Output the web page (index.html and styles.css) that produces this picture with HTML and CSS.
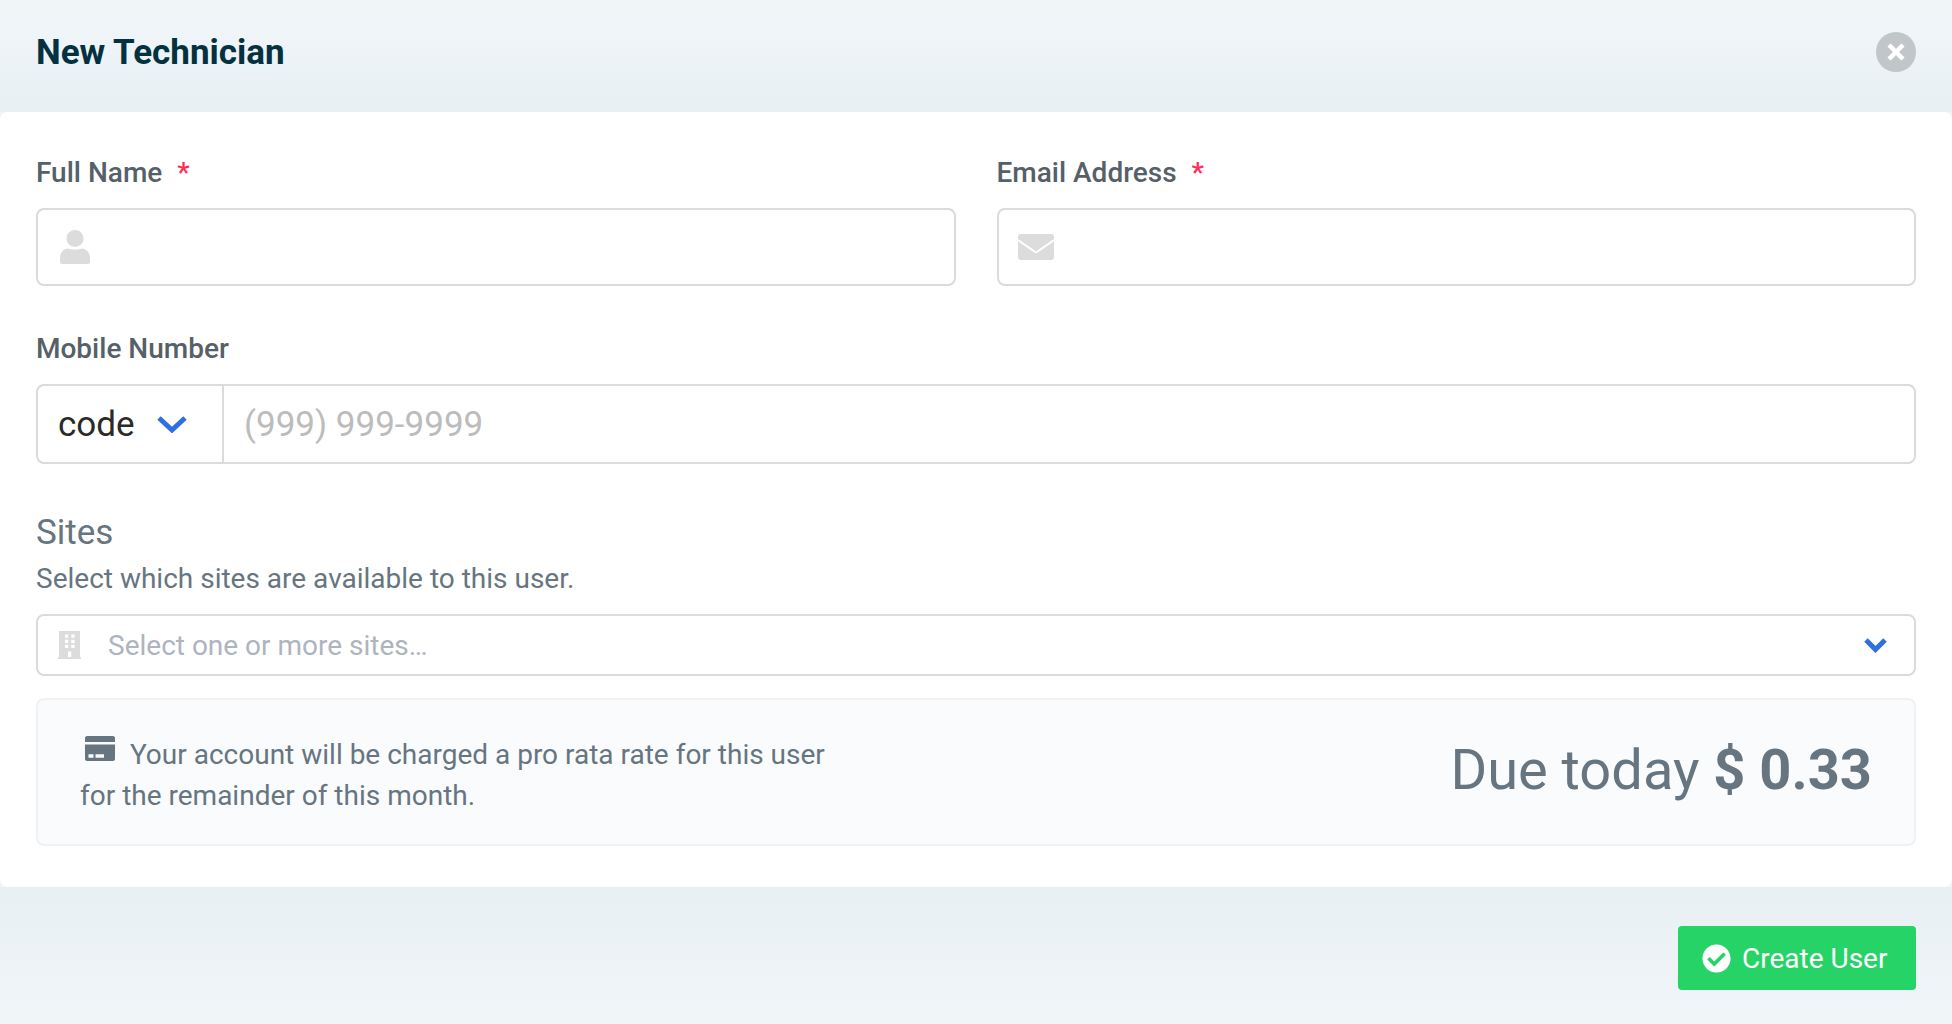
FILE: index.html
```html
<!DOCTYPE html>
<html lang="en">
<head>
    <meta charset="UTF-8">
    <title>New Technician</title>
    <link rel="stylesheet" href="styles.css">
</head>
<body>
<div class="modal">
    <div class="modal_header">
        <div class="modal_title">New Technician</div>
        <div class="close_btn">
            <svg viewBox="0 0 20 20" width="20" height="20"><path d="M3 3l14 14M17 3L3 17" stroke="#fff" stroke-width="4.500" fill="none"/></svg>
        </div>
    </div>

    <div class="modal_body">
        <div class="field_row">
            <div class="field">
                <label class="field_label">Full Name <span class="required">*</span></label>
                <div class="text_box">
                    <svg class="box_icon" viewBox="0 0 30 34" width="30" height="34"><circle cx="15" cy="8.500" r="8.500" fill="#dcdcdc"/><path d="M0 28c0-5 3-9 8-9.500 2 .7 4.500 1.200 7 1.200s5-.5 7-1.200c5 .5 8 4.500 8 9.500v4c0 1-1 2-2 2H2c-1 0-2-1-2-2z" fill="#dcdcdc"/></svg>
                    <input class="plain_input" type="text">
                </div>
            </div>
            <div class="field">
                <label class="field_label">Email Address <span class="required">*</span></label>
                <div class="text_box">
                    <svg class="box_icon mail_icon" viewBox="0 0 36 26" width="36" height="26"><rect width="36" height="26" rx="3" fill="#dcdcdc"/><path d="M0 6l18 12.500L36 6" stroke="#fff" stroke-width="2" fill="none"/></svg>
                    <input class="plain_input" type="text">
                </div>
            </div>
        </div>

        <label class="field_label">Mobile Number</label>
        <div class="phone_box">
            <div class="code_select">
                <span>code</span>
                <svg viewBox="0 0 32 18" width="32" height="18"><path d="M3 3l13 12L29 3" stroke="#2f6fe0" stroke-width="5" fill="none"/></svg>
            </div>
            <input class="phone_input" type="text" placeholder="(999) 999-9999">
        </div>

        <div class="section_title">Sites</div>
        <div class="section_desc">Select which sites are available to this user.</div>
        <div class="sites_select">
            <svg class="building_icon" viewBox="0 0 23 28" width="23" height="28"><path fill="#dcdcdc" fill-rule="evenodd" d="M1 0h21v26h1v2H0v-2h1zM7 3.500v3.300h3.300V3.500zm6.300 0v3.300h3.300V3.500zM7 8.700V12h3.300V8.700zm6.300 0V12h3.300V8.700zM7 13.800v3.300h3.300v-3.300zm6.300 0v3.300h3.300v-3.300zM10 20.500V26h3.300v-5.500z"/></svg>
            <span class="sites_placeholder">Select one or more sites…</span>
            <svg class="sites_arrow" viewBox="0 0 25 16" width="25" height="16"><path d="M3 3l9.500 9.500L22 3" stroke="#2f6fe0" stroke-width="5" fill="none"/></svg>
        </div>

        <div class="charge_box">
            <div class="charge_text">
                <svg class="card_icon" viewBox="0 0 30 25" width="30" height="25"><path fill="#66757f" fill-rule="evenodd" d="M2 0h26c1 0 2 1 2 2v4H0V2c0-1 1-2 2-2zM0 8.500h30V23c0 1-1 2-2 2H2c-1 0-2-1-2-2zm3.500 9.800v3.400h5v-3.400zm7 0v3.400H19v-3.400z"/></svg>
                Your account will be charged a pro rata rate for this user<br>
                for the remainder of this month.
            </div>
            <div class="due_today">Due today <b>$ 0.33</b></div>
        </div>
    </div>

    <div class="modal_footer">
        <div class="create_btn">
            <svg viewBox="0 0 512 512" width="29" height="29"><path fill="#fff" d="M504 256c0 136.967-111.033 248-248 248S8 392.967 8 256 119.033 8 256 8s248 111.033 248 248zM227.314 387.314l184-184c6.248-6.248 6.248-16.379 0-22.627l-22.627-22.627c-6.248-6.249-16.379-6.249-22.628 0L216 308.118l-70.059-70.059c-6.248-6.248-16.379-6.248-22.628 0l-22.627 22.627c-6.248 6.248-6.248 16.379 0 22.627l104 104c6.249 6.249 16.379 6.249 22.628.001z"/></svg>
            Create User
        </div>
    </div>
</div>
</body>
</html>
```

FILE: styles.css
```css
html, body {
    margin: 0;
    padding: 0;
    background-color: #f0f5f8;
}

.modal {
    width: 1952px;
    height: 1024px;
    font-family: Roboto, "Liberation Sans", sans-serif;
}

.modal_header {
    height: 112px;
    padding: 0 36px;
    box-sizing: border-box;
    display: flex;
    align-items: center;
    justify-content: space-between;
    background: linear-gradient(#f1f6f9, #e8f0f3);
}

.modal_title {
    font-size: 35px;
    font-weight: 700;
    color: #03313f;
    margin-top: -8px;
}

.close_btn {
    width: 40px;
    height: 40px;
    margin-top: -8px;
    border-radius: 50%;
    background-color: #c1c6c9;
    display: flex;
    align-items: center;
    justify-content: center;
}

.modal_body {
    height: 775px;
    padding: 42px 36px 0 36px;
    box-sizing: border-box;
    background-color: #ffffff;
    border-radius: 8px;
}

.field_row {
    display: flex;
    gap: 41px;
    margin-bottom: 46px;
}

.field {
    flex: 1;
}

.field_label {
    display: block;
    height: 34px;
    line-height: 34px;
    margin-bottom: 18px;
    font-size: 28px;
    font-weight: 500;
    color: #556069;
}

.field .field_label {
    margin-top: 2px;
    margin-bottom: 18px;
}

.required {
    margin-left: 8px;
    color: #ff2d55;
}

.text_box {
    height: 78px;
    padding-left: 22px;
    box-sizing: border-box;
    border: 2px solid #dbdbdb;
    border-radius: 8px;
    display: flex;
    align-items: center;
}

.plain_input {
    flex: 1;
    min-width: 0;
    border: 0;
    outline: 0;
    background: transparent;
}

.box_icon {
    margin-right: 14px;
}

.mail_icon {
    margin-left: -3px;
}

.phone_box {
    height: 80px;
    box-sizing: border-box;
    border: 2px solid #dbdbdb;
    border-radius: 8px;
    display: flex;
    margin-bottom: 49px;
}

.code_select {
    width: 186px;
    padding: 0 34px 0 20px;
    box-sizing: border-box;
    border-right: 2px solid #dbdbdb;
    display: flex;
    align-items: center;
    justify-content: space-between;
    font-size: 35px;
    color: #2a2a2a;
}

.phone_input {
    flex: 1;
    min-width: 0;
    border: 0;
    outline: 0;
    padding: 0 20px;
    background: transparent;
    font-family: Roboto, "Liberation Sans", sans-serif;
    font-size: 35px;
    color: #2a2a2a;
}

.phone_input::placeholder {
    color: #bcbcbc;
    opacity: 1;
}

.section_title {
    height: 40px;
    line-height: 40px;
    font-size: 35px;
    color: #66757f;
    margin-bottom: 9px;
}

.section_desc {
    height: 34px;
    line-height: 34px;
    font-size: 28px;
    color: #66757f;
    margin-bottom: 18px;
}

.sites_select {
    height: 62px;
    padding: 0 26px 0 20px;
    box-sizing: border-box;
    border: 2px solid #dbdbdb;
    border-radius: 8px;
    display: flex;
    align-items: center;
    font-size: 28px;
    color: #adb4bf;
}

.building_icon {
    margin-right: 27px;
}

.sites_placeholder {
    flex: 1;
}

.charge_box {
    height: 148px;
    margin-top: 22px;
    padding: 0 42px;
    box-sizing: border-box;
    border: 2px solid #eff1f3;
    border-radius: 8px;
    background-color: #fafbfd;
    display: flex;
    align-items: center;
    justify-content: space-between;
    color: #66757f;
}

.charge_text {
    margin-top: 6px;
    font-size: 28px;
    line-height: 41px;
}

.card_icon {
    margin: 0 8px 0 5px;
    vertical-align: 3px;
}

.due_today {
    margin-bottom: 5px;
    font-size: 56px;
}

.due_today b {
    font-weight: 700;
}

.modal_footer {
    height: 137px;
    padding: 39px 36px 0 36px;
    box-sizing: border-box;
    display: flex;
    justify-content: flex-end;
    background: linear-gradient(#e8f0f3, #f0f5f8);
}

.create_btn {
    width: 238px;
    height: 64px;
    padding-left: 24px;
    box-sizing: border-box;
    border-radius: 4px;
    background-color: #26d366;
    color: #ffffff;
    font-size: 28px;
    display: flex;
    align-items: center;
    gap: 11px;
}
```
